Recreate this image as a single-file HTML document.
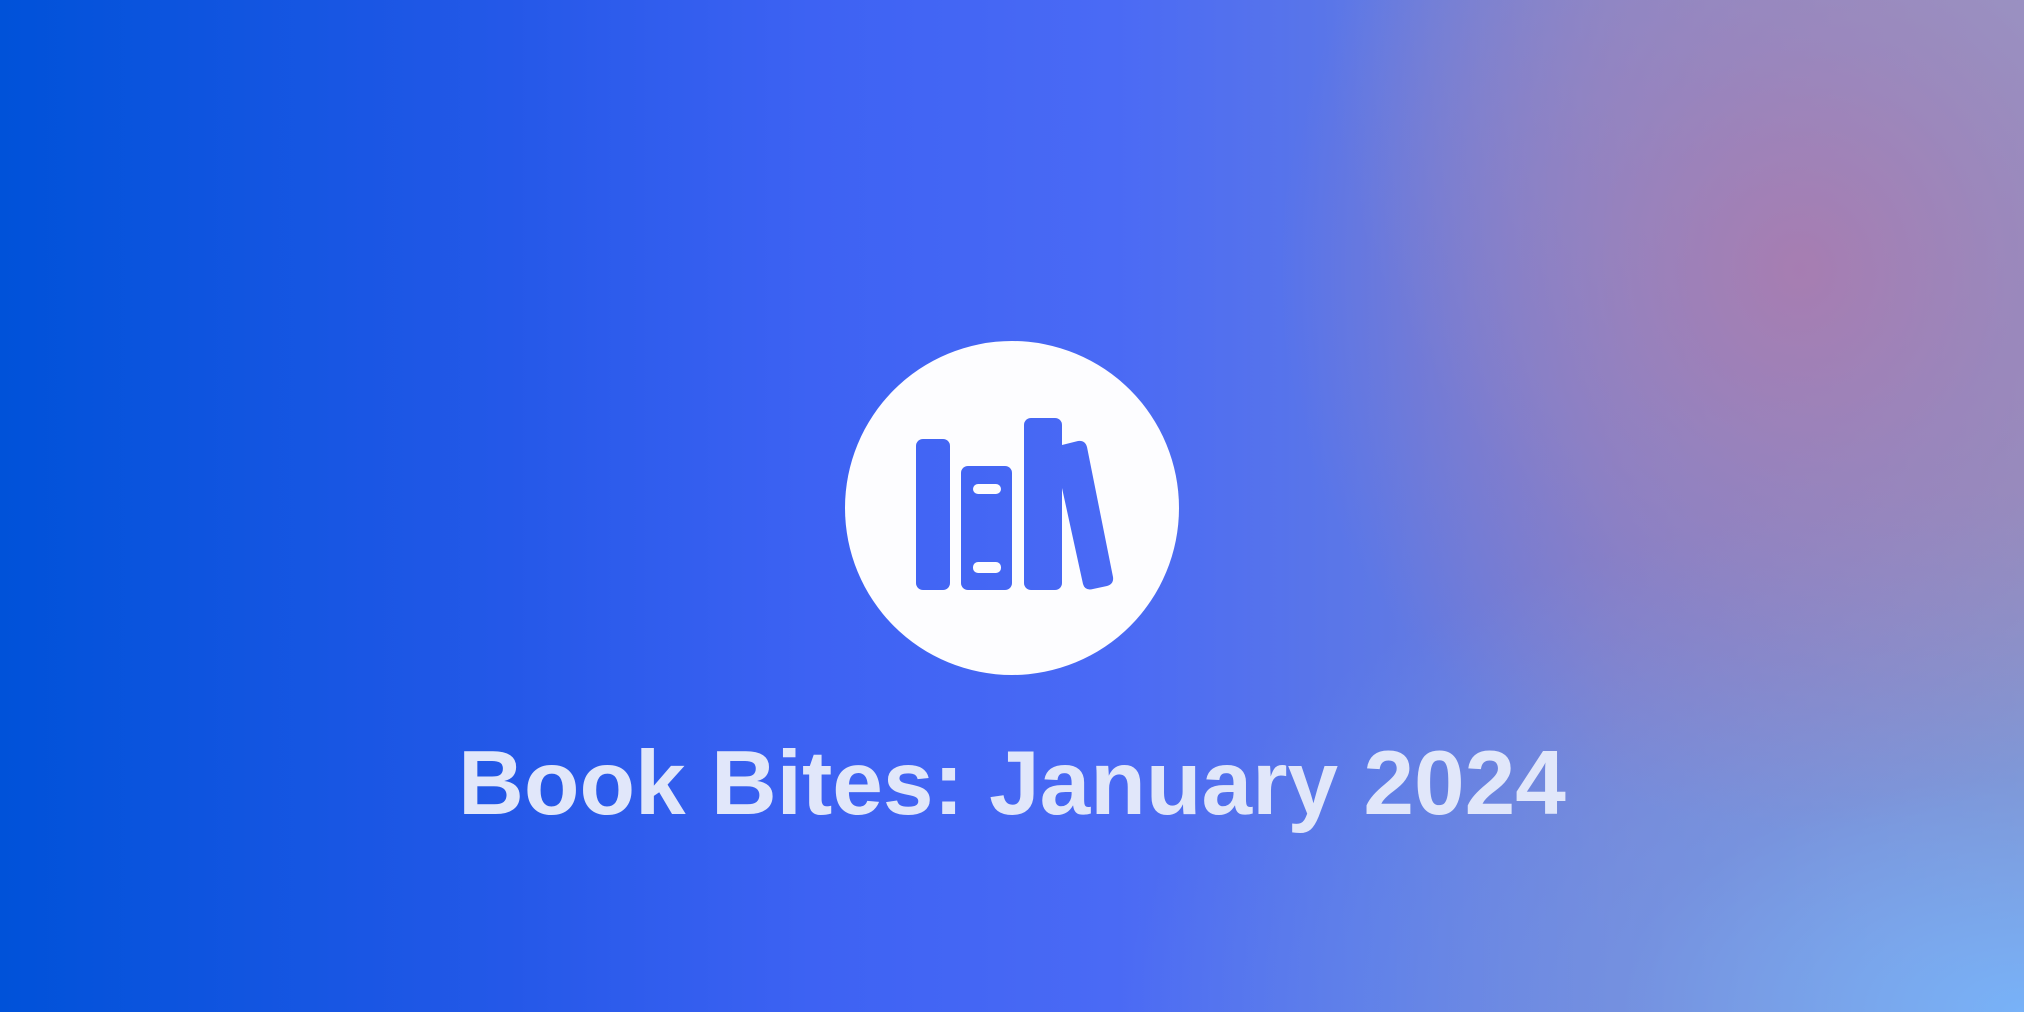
<!DOCTYPE html>
<html><head><meta charset="utf-8"><style>
html,body{margin:0;padding:0}
body{width:2024px;height:1012px;overflow:hidden;position:relative;
background:
radial-gradient(ellipse 520px 560px at 1800px 270px, rgba(168,124,176,0.95) 0%, rgba(160,126,182,0.6) 40%, rgba(150,130,190,0) 100%),
radial-gradient(ellipse 900px 520px at 2024px 1012px, rgba(120,178,248,1) 0%, rgba(110,160,240,0.5) 45%, rgba(100,140,240,0) 100%),
radial-gradient(ellipse 700px 700px at 2024px 0px, rgba(150,155,200,1) 0%, rgba(150,150,200,0) 100%),
linear-gradient(90deg,#0052d9 0%,#2458e8 25%,#3d62f3 40%,#4a6af5 55%,#5d78e6 68%,#7a80d0 80%,#9090c0 100%);}
svg{position:absolute;left:0;top:0}
.t{position:absolute;left:0;width:2024px;top:734px;text-align:center;font-family:"Liberation Sans",Arial,sans-serif;font-weight:bold;font-size:91px;line-height:100px;color:#e1e7fa;letter-spacing:0px}
</style></head><body>
<svg width="2024" height="1012" viewBox="0 0 2024 1012">
<defs><mask id="m"><rect width="2024" height="1012" fill="#fff"/>
<rect x="916" y="439" width="34" height="151" rx="7" fill="#000"/>
<rect x="961" y="466" width="51" height="124" rx="7" fill="#000"/>
<rect x="1024" y="418" width="38" height="172" rx="7" fill="#000"/>
<path d="M1062 445 L1078 441 Q1085 440 1087 447 L1113 577 Q1114 584 1107 586 L1093 589 Q1085 591 1083 584 L1062 488 Z" fill="#000"/>
</mask></defs>
<circle cx="1012" cy="508" r="167" fill="#fdfdff" mask="url(#m)"/>
<rect x="973" y="484" width="28" height="10" rx="5" fill="#fdfdff"/>
<rect x="973" y="562" width="28" height="11" rx="5" fill="#fdfdff"/>
</svg>
<div class="t">Book Bites: January 2024</div>
</body></html>
